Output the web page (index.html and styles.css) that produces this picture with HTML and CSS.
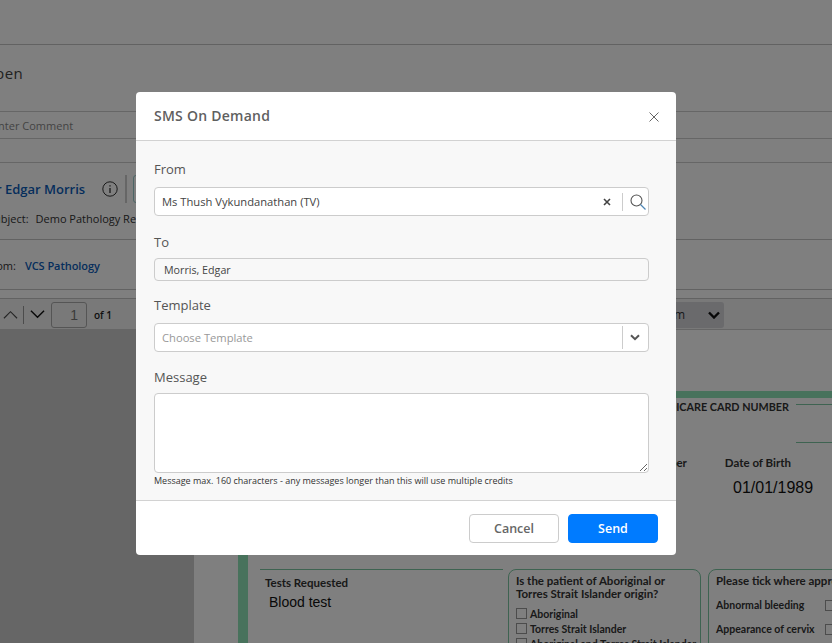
FILE: index.html
```html
<!DOCTYPE html>
<html lang="en">
<head>
<meta charset="utf-8">
<title>SMS On Demand</title>
<link rel="stylesheet" href="styles.css">
</head>
<body>
<div class="page">
  <div class="row row-top"></div>
  <div class="row row-title"><span class="title-text">Open</span></div>
  <div class="row row-comment"><div class="comment-box">Enter Comment</div></div>
  <div class="row row-patient">
    <div class="patient-line">
      <a class="link patient-name">Mr Edgar Morris</a>
      <svg class="info-icon" viewBox="0 0 16 16" width="16" height="16"><circle cx="8" cy="8" r="7.2" fill="none" stroke="#333" stroke-width="1"/><path d="M8 7v5M8 4.2v1.4" stroke="#333" stroke-width="1.3" fill="none"/></svg>
      <span class="vsep"></span>
      <span class="small-btn"></span>
    </div>
    <div class="subject-line"><span class="meta-label">Subject:</span><span>Demo Pathology Report</span></div>
  </div>
  <div class="row row-from"><span class="meta-label">From:</span><a class="link">VCS Pathology</a></div>
  <div class="row row-gap"></div>
  <div class="row row-tools">
    <svg class="chev chev-up" viewBox="0 0 16 9" width="15" height="9"><path d="M1 8.5l7-7 7 7" fill="none" stroke="#4a4a4a" stroke-width="1.2"/></svg>
    <span class="tool-sep"></span>
    <svg class="chev" viewBox="0 0 16 9" width="15" height="9"><path d="M1 .5l7 7 7-7" fill="none" stroke="#111" stroke-width="1.5"/></svg>
    <span class="page-num">1</span>
    <span class="page-of">of 1</span>
    <span class="zoom-select">
      <span>Zoom</span>
      <svg viewBox="0 0 12 8" width="12" height="8"><path d="M1 1.5l5 5 5-5" fill="none" stroke="#111" stroke-width="2.4"/></svg>
    </span>
  </div>
  <div class="viewer">
    <div class="paper">
      <div class="frame">
        <div class="form-top">
          <div class="form-heading"><span>MEDICARE CARD NUMBER</span><span class="rule"></span></div>
          <div class="form-rule-row"><span class="rule"></span></div>
          <div class="form-fields">
            <span class="field-a">Medicare Number</span>
            <span class="field-b">Date of Birth</span>
          </div>
          <div class="form-dob">01/01/1989</div>
        </div>
        <div class="form-bottom">
          <div class="tests">
            <div class="form-label">Tests Requested</div>
            <div class="typed">Blood test</div>
          </div>
          <div class="box box-origin">
            <div class="box-title">Is the patient of Aboriginal or Torres Strait Islander origin?</div>
            <div class="check"><i></i>Aboriginal</div>
            <div class="check"><i></i>Torres Strait Islander</div>
            <div class="check"><i></i>Aboriginal and Torres Strait Islander</div>
          </div>
          <div class="box box-tick">
            <div class="box-title">Please tick where appropriate</div>
            <div class="tick-row">Abnormal bleeding<i></i></div>
            <div class="tick-row">Appearance of cervix<i></i></div>
          </div>
        </div>
      </div>
    </div>
  </div>

  <div class="backdrop"></div>

  <div class="modal">
    <div class="modal-head">
      <h1>SMS On Demand</h1>
      <svg class="close" viewBox="0 0 10 10" width="10" height="10"><path d="M.5.5l9 9M9.5.5l-9 9" stroke="#666" stroke-width="1" fill="none"/></svg>
    </div>
    <div class="modal-body">
      <div class="label label-from">From</div>
      <div class="control control-tall">
        <span class="value">Ms Thush Vykundanathan (TV)</span>
        <svg class="clear" viewBox="0 0 8 8" width="8" height="8"><path d="M1 1l6 6M7 1L1 7" stroke="#444" stroke-width="1.6" fill="none"/></svg>
        <span class="divider"></span>
        <svg class="search" viewBox="0 0 16 16" width="16" height="16"><circle cx="6.5" cy="6.5" r="5.5" fill="none" stroke="#555" stroke-width="1.1"/><path d="M10.5 10.5l5 5" stroke="#4f86b5" stroke-width="1.2"/></svg>
      </div>
      <div class="label label-to">To</div>
      <div class="control control-to"><span>Morris, Edgar</span></div>
      <div class="label label-template">Template</div>
      <div class="control control-tall control-select">
        <span class="value placeholder">Choose Template</span>
        <span class="divider divider-select"></span>
        <svg class="caret" viewBox="0 0 10 7" width="10" height="7"><path d="M1 1.2l4 4 4-4" fill="none" stroke="#555" stroke-width="2"/></svg>
      </div>
      <div class="label label-message">Message</div>
      <textarea class="message" aria-label="Message"></textarea>
      <div class="hint">Message max. 160 characters - any messages longer than this will use multiple credits</div>
    </div>
    <div class="modal-foot">
      <button class="btn btn-cancel" type="button">Cancel</button>
      <button class="btn btn-send" type="button">Send</button>
    </div>
  </div>
</div>
</body>
</html>
```
FILE: styles.css
```css
* { box-sizing: border-box; }
html, body { margin: 0; padding: 0; }
body { font-family: "Open Sans", "Noto Sans", sans-serif; color: #333; background: #fff; }

.page { position: relative; width: 832px; height: 643px; overflow: hidden; background: #fff; display: flex; flex-direction: column; }

.row { flex: none; border-bottom: 1px solid #c4c4c4; overflow: hidden; white-space: nowrap; }
.row-top { height: 45px; background: #fff; }
.row-title { height: 67px; border-bottom: 1px solid #ccc; padding-top: 18px; font-size: 15px; color: #444; line-height: 22px; }
.title-text { display: block; margin-left: -17px; letter-spacing: .4px; margin-top: -1px; }
.row-comment { height: 27px; border-bottom: 1px solid #ccc; margin-bottom: 24px; font-size: 11px; line-height: 27px; color: #888; }
.comment-box { margin-left: -8px; }
.row-patient { height: 78px; padding-top: 12px; border-top: 1px solid #ccc; margin-top: -1px; font-size: 11px; }
.patient-line { display: flex; align-items: center; height: 28px; margin-left: -16px; }
.patient-name { font-size: 13px; font-weight: 600; width: 118px; }
.vsep { width: 2px; height: 28px; background: #ccc; margin-left: 7px; }
.small-btn { width: 6px; height: 28px; margin-left: 6px; border: 1px solid #9cc; border-radius: 3px 0 0 3px; }
.subject-line { display: flex; gap: 7px; margin-top: 7px; line-height: 18px; margin-left: -12px; color: #333; }
.meta-label { color: #333; }
.row-from { height: 50px; padding-top: 16px; display: flex; gap: 9px; margin-left: -14px; font-size: 11px; line-height: 20px; }
.link { color: #0b5cb8; }
.row-from .link { font-weight: 600; letter-spacing: -.05px; }
.row-gap { height: 9px; }
.row-tools { height: 31px; display: flex; align-items: center; background: #f2f2f2; padding-left: 3px; border-bottom: 1px solid #ccc; padding-top: 1px; }
.tool-sep { width: 1px; height: 18px; background: #999; margin: 0 6px 0 5px; }
.chev { flex: none; }
.page-num { width: 36px; height: 26px; margin-left: 6px; border: 1px solid #aaa; border-radius: 3px; background: #f2f2f2; font: 14px/24px "Liberation Sans", sans-serif; color: #777; text-align: right; padding-right: 8px; }
.page-of { margin-left: 7px; font-size: 10px; font-weight: 600; color: #222; }
.zoom-select { width: 110px; height: 26px; margin-left: auto; margin-right: 108px; display: flex; align-items: center; justify-content: flex-end; gap: 23px; padding-right: 4px; background: #d4d4d8; border-radius: 3px; font-size: 12px; color: #333; }

.viewer { flex: 1; min-height: 0; background: #ccc; padding-left: 194px; overflow: hidden; }
.paper { height: 100%; background: #fff; padding: 61px 0 0 44px; font-family: Lato, "Noto Sans", sans-serif; }
.frame { border-left: 10px solid #90e4b8; border-top: 7px solid #90e4b8; height: 300px; }
.form-top { height: 171px; display: flex; flex-direction: column; }
.form-heading { display: flex; justify-content: flex-end; align-items: center; height: 17px; margin-top: 0; font-size: 10.8px; font-weight: 700; color: #333; white-space: nowrap; }
.rule { display: block; width: 36px; height: 1px; background: #7cc6a2; }
.form-heading .rule { margin-left: 7px; margin-bottom: 4px; }
.form-rule-row { display: flex; justify-content: flex-end; margin-top: 27px; }
.form-fields { display: flex; justify-content: flex-end; gap: 38px; margin-top: 13px; padding-right: 41px; font-size: 11.5px; font-weight: 700; color: #333; white-space: nowrap; height: 14px; line-height: 14px; }
.form-dob { margin: 8px 0 0 485px; font: 16px/20px "Liberation Sans", sans-serif; color: #111; }
.form-bottom { display: grid; grid-template-columns: 253px 193px 200px; column-gap: 7px; }
.tests { border-top: 1px solid #7cc6a2; margin: 0 0 0 12px; padding-top: 6px; width: 243px; }
.form-label { font-size: 11.5px; font-weight: 700; color: #333; padding-left: 5px; line-height: 14px; }
.typed { font: 14px/18px "Liberation Sans", sans-serif; color: #111; padding-left: 9px; margin-top: 3px; }
.box { border: 1px solid #7cc6a2; border-radius: 8px; padding: 4px 7px; height: 120px; white-space: nowrap; overflow: hidden; }
.box-origin .box-title { white-space: normal; }
.box-title { font-size: 11.5px; font-weight: 700; color: #333; line-height: 13px; margin-bottom: 6px; }
.check { display: flex; align-items: center; gap: 3px; font-size: 10.5px; font-weight: 700; color: #333; height: 15px; }
.check i, .tick-row i { flex: none; width: 11px; height: 11px; border: 1px solid #999; }
.tick-row { display: flex; justify-content: space-between; align-items: center; font-size: 10.5px; font-weight: 700; color: #333; height: 24px; width: 120px; }
.box-tick { width: 200px; }

.backdrop { position: absolute; inset: 0; background: rgba(0, 0, 0, .5); }

.modal { position: absolute; left: 136px; top: 92px; width: 540px; height: 463px; background: #fff; border-radius: 4px; display: flex; flex-direction: column; overflow: hidden; }
.modal-head { flex: none; height: 49px; display: flex; align-items: center; justify-content: space-between; padding: 0 17px 0 18px; border-bottom: 1px solid #d2d2d2; }
.modal-head h1 { margin: 0 0 2px; font-size: 14px; font-weight: 600; color: #5f5f5f; letter-spacing: .25px; }
.close { display: block; margin-top: 1px; }
.modal-body { flex: none; height: 360px; background: #f8f8f8; padding: 18px 27px 0 18px; border-bottom: 1px solid #d2d2d2; }
.label { font-size: 13px; line-height: 20px; color: #555; }
.label-from { margin-bottom: 8px; }
.label-to { margin-top: 16px; margin-bottom: 6px; }
.label-template { margin-top: 14px; margin-bottom: 8px; }
.label-message { margin-top: 15px; margin-bottom: 6px; }
.control { display: flex; align-items: center; background: #fff; border: 1px solid #ccc; border-radius: 4px; font-size: 11px; color: #444; white-space: nowrap; }
.control-tall { height: 29px; padding: 0 7px; }
.control-tall .value { font-size: 11.2px; }
.control-to { height: 23px; padding: 0 9px; background: #f8f8f8; font-size: 10.7px; }
.value { flex: 1; }
.placeholder { color: #999; }
.clear { flex: none; margin-right: 11px; }
.divider { flex: none; width: 1px; height: 18px; background: #ccc; margin-right: 7px; }
.search { flex: none; margin-right: -5px; }
.control-select { padding-right: 8px; }
.divider-select { height: 23px; margin-right: 7px; margin-left: 2px; }
.caret { flex: none; }
.message { display: block; width: 495px; height: 80px; padding: 6px 7px; background: #fff; border: 1px solid #ccc; border-radius: 4px; resize: vertical; outline: none; font: inherit; }
.hint { margin-top: 2px; font-size: 9px; line-height: 12px; color: #333; white-space: nowrap; }
.modal-foot { flex: 1; display: flex; justify-content: flex-end; align-items: flex-start; gap: 9px; padding: 13px 18px 0 0; }
.btn { width: 90px; height: 29px; border-radius: 4px; font: 600 12.5px "Open Sans", sans-serif; cursor: pointer; padding: 0; }
.btn-cancel { background: #fff; border: 1px solid #ccc; color: #666; }
.btn-send { background: #007bff; border: 1px solid #007bff; color: #fff; }
```
